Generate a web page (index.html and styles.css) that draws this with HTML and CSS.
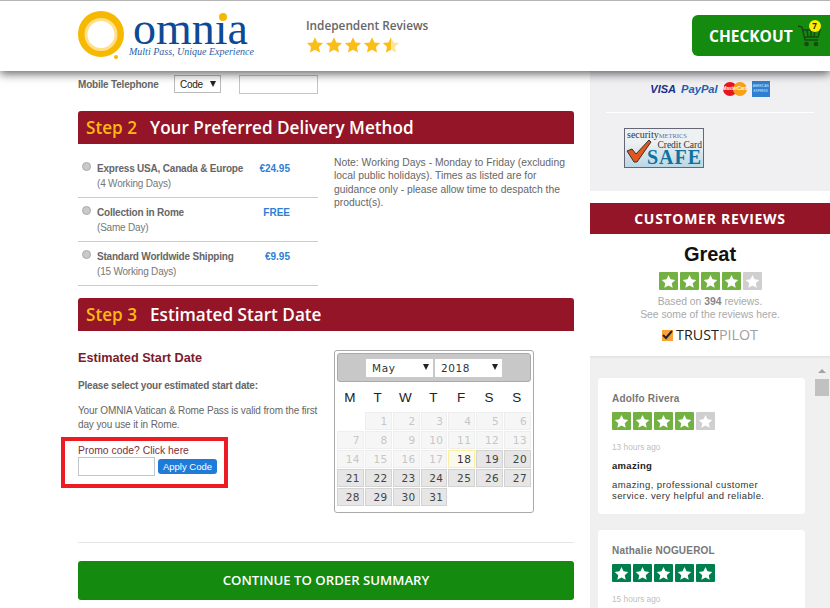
FILE: index.html

```html
<!DOCTYPE html>
<html lang="en">
<head>
  <meta charset="UTF-8" />
  <meta name="viewport" content="width=device-width, initial-scale=1.0"/>
  <title>Omnia Checkout</title>
  <link rel="stylesheet" href="styles.css">
</head>
<body>
  <svg class="defs" width="0" height="0">
    <symbol id="star" viewBox="0 0 24 24"><path d="M12 1.500l3.200 7 7.600.9-5.600 5.200 1.500 7.500L12 18.300l-6.700 3.800 1.500-7.500L1.200 9.400l7.600-.9z"/></symbol>
  </svg>

  <header id="header">
    <div class="logo">
      <svg class="logo-ring" width="46" height="50" viewBox="0 0 46 50">
        <circle cx="23" cy="23" r="18.500" fill="#fff" stroke="#f6b800" stroke-width="9"/>
        <circle cx="23" cy="23.500" r="15" fill="#fff" stroke="#ffe08a" stroke-width="3"/>
        <circle cx="38" cy="46" r="2" fill="#f6b800"/>
      </svg>
      <div class="logo-text">
        <span class="logo-name">omn<span class="logo-i">ı<b class="logo-dot"></b></span>a</span>
        <span class="logo-tag">Multi Pass, Unique Experience</span>
      </div>
    </div>
    <div class="indep">
      <div class="indep-title">Independent Reviews</div>
      <div class="indep-stars">
        <svg class="gold"><use href="#star"/></svg>
        <svg class="gold"><use href="#star"/></svg>
        <svg class="gold"><use href="#star"/></svg>
        <svg class="gold"><use href="#star"/></svg>
        <span class="half-star">
          <svg class="gold pale"><use href="#star"/></svg>
          <span class="half-clip"><svg class="gold"><use href="#star"/></svg></span>
        </span>
      </div>
    </div>
    <a class="checkout" href="#">
      <span>CHECKOUT</span>
      <span class="cart">
        <svg width="24" height="24" viewBox="0 0 24 24" fill="none" stroke="#174a12" stroke-width="1.500">
          <path d="M1 2l4 1 3 13h13M6 6h17l-2 7H8M10 6l1 7M14 6v7M18 6l-1 7"/>
          <circle cx="9.500" cy="20" r="1.600" fill="#174a12"/>
          <circle cx="19" cy="20" r="1.600" fill="#174a12"/>
        </svg>
        <span class="cart-count">7</span>
      </span>
    </a>
  </header>

  <div id="page">
    <main class="left">
      <div class="phone-row">
        <label>Mobile Telephone</label>
        <span class="code-select">Code<i class="arrow"></i></span>
        <input class="phone-input" type="text">
      </div>

      <h2 class="step-bar"><span class="step-num">Step 2</span>Your Preferred Delivery Method</h2>
      <div class="delivery">
        <div class="options">
          <div class="option">
            <span class="radio"></span>
            <div class="option-text"><b>Express USA, Canada &amp; Europe</b><span>(4 Working Days)</span></div>
            <b class="price">€24.95</b>
          </div>
          <div class="option">
            <span class="radio"></span>
            <div class="option-text"><b>Collection in Rome</b><span>(Same Day)</span></div>
            <b class="price">FREE</b>
          </div>
          <div class="option">
            <span class="radio"></span>
            <div class="option-text"><b>Standard Worldwide Shipping</b><span>(15 Working Days)</span></div>
            <b class="price">€9.95</b>
          </div>
        </div>
        <p class="note">Note: Working Days - Monday to Friday (excluding local public holidays). Times as listed are for guidance only - please allow time to despatch the product(s).</p>
      </div>

      <h2 class="step-bar"><span class="step-num">Step 3</span>Estimated Start Date</h2>
      <div class="start">
        <div class="start-text">
          <h3>Estimated Start Date</h3>
          <p class="select-msg">Please select your estimated start date:</p>
          <p class="valid-msg">Your OMNIA Vatican &amp; Rome Pass is valid from the first day you use it in Rome.</p>
          <div class="promo">
            <div class="promo-label">Promo code? Click here</div>
            <div class="promo-row">
              <input class="promo-input" type="text">
              <button class="apply">Apply Code</button>
            </div>
          </div>
        </div>
        <div class="calendar">
          <div class="cal-head">
            <span class="cal-select">May<i class="arrow"></i></span>
            <span class="cal-select">2018<i class="arrow"></i></span>
          </div>
          <div class="cal-days">
            <span>M</span><span>T</span><span>W</span><span>T</span><span>F</span><span>S</span><span>S</span>
          </div>
          <div class="cal-grid" id="calGrid"></div>
        </div>
      </div>

      <hr class="rule">
      <a class="continue" href="#">CONTINUE TO ORDER SUMMARY</a>
    </main>

    <aside class="right">
      <div class="secure">
        <div class="cards">
          <span class="visa">VISA</span>
          <span class="paypal">PayPal</span>
          <span class="mc"><i></i><i></i><em>MasterCard</em></span>
          <span class="amex">AMERICAN EXPRESS</span>
        </div>
        <div class="secure-rule"></div>
        <div class="metrics">
          <div class="metrics-top">security<span>METRICS</span></div>
          <div class="metrics-mid">Credit Card</div>
          <div class="metrics-safe">SAFE</div>
          <svg class="metrics-check" width="26" height="26" viewBox="0 0 26 26"><path d="M1 13l5-2 4 5L23 2l2 2L11 24H8z" fill="#e2571e" stroke="#333" stroke-width="1"/></svg>
        </div>
      </div>

      <h2 class="reviews-bar">CUSTOMER REVIEWS</h2>
      <div class="summary">
        <div class="great">Great</div>
        <div class="tp-stars">
          <span class="tp green"><svg><use href="#star"/></svg></span>
          <span class="tp green"><svg><use href="#star"/></svg></span>
          <span class="tp green"><svg><use href="#star"/></svg></span>
          <span class="tp green"><svg><use href="#star"/></svg></span>
          <span class="tp off"><svg><use href="#star"/></svg></span>
        </div>
        <p class="based">Based on <b>394</b> reviews.<br>See some of the reviews here.</p>
        <div class="trustpilot"><span class="tp-box"><svg width="11" height="11" viewBox="0 0 11 11"><path d="M1 5l3 3 6-7" fill="none" stroke="#222" stroke-width="2"/></svg></span>TRUST<span>PILOT</span></div>
      </div>

      <div class="review-list">
        <div class="cards-col">
          <div class="review">
            <div class="who">Adolfo Rivera</div>
            <div class="tp-stars">
              <span class="tp green"><svg><use href="#star"/></svg></span>
              <span class="tp green"><svg><use href="#star"/></svg></span>
              <span class="tp green"><svg><use href="#star"/></svg></span>
              <span class="tp green"><svg><use href="#star"/></svg></span>
              <span class="tp off"><svg><use href="#star"/></svg></span>
            </div>
            <div class="ago">13 hours ago</div>
            <div class="r-title">amazing</div>
            <p class="r-body">amazing, professional customer service. very helpful and reliable.</p>
          </div>
          <div class="review">
            <div class="who">Nathalie NOGUEROL</div>
            <div class="tp-stars">
              <span class="tp dark"><svg><use href="#star"/></svg></span>
              <span class="tp dark"><svg><use href="#star"/></svg></span>
              <span class="tp dark"><svg><use href="#star"/></svg></span>
              <span class="tp dark"><svg><use href="#star"/></svg></span>
              <span class="tp dark"><svg><use href="#star"/></svg></span>
            </div>
            <div class="ago">15 hours ago</div>
          </div>
        </div>
        <div class="scrollbar"><i class="scroll-up"></i><i class="scroll-thumb"></i></div>
      </div>
    </aside>
  </div>

  <script>
    // May 2018 starts on a Tuesday, days before the 18th are disabled
    const grid = document.getElementById('calGrid');
    grid.appendChild(document.createElement('span'));
    for (let d = 1; d <= 31; d++) {
      const cell = document.createElement('span');
      cell.textContent = d;
      cell.className = d < 18 ? 'day off' : d === 18 ? 'day today' : 'day';
      grid.appendChild(cell);
    }
  </script>
</body>
</html>
```

FILE: styles.css

```css
* {
  margin: 0;
  padding: 0;
  box-sizing: border-box;
}
html, body {
  width: 100%;
  height: 100%;
  overflow: hidden;
  font-family: "Liberation Sans", Arial, sans-serif;
  font-size: 11px;
  color: #666;
  background: #fff;
}
.defs {
  display: block;
  height: 0;
}

/* header */
#header {
  height: 71px;
  display: flex;
  align-items: flex-start;
  padding-left: 78px;
  background: #fff;
  border-top: 1px solid #b5b5b5;
  box-shadow: 0 3px 9px rgba(0,0,0,0.6);
  position: relative;
  z-index: 5;
}
.logo {
  width: 228px;
  display: flex;
  padding-top: 10px;
}
.logo-ring {
  flex: none;
}
.logo-text {
  display: flex;
  flex-direction: column;
  margin-left: 5px;
}
.logo-name {
  font-family: "Liberation Serif", serif;
  font-size: 46px;
  line-height: 33px;
  height: 34px;
  margin: 1px 0 0 4px;
  color: #0c4a96;
}
.logo-i {
  position: relative;
}
.logo-dot {
  position: absolute;
  left: 4px;
  top: 10px;
  width: 8px;
  height: 8px;
  border-radius: 50%;
  background: #f6b800;
}
.logo-tag {
  font-family: "Liberation Serif", serif;
  font-style: italic;
  font-size: 10px;
  line-height: 12px;
  color: #2b62a8;
  white-space: nowrap;
}
.indep {
  width: 386px;
  padding-top: 16px;
}
.indep-title {
  font-family: "Open Sans", sans-serif;
  font-size: 11.800px;
  font-weight: 600;
  line-height: 16px;
  color: #666;
}
.indep-stars {
  display: flex;
  gap: 1px;
  margin-top: 3px;
}
.gold {
  width: 18px;
  height: 18px;
  fill: #fbbd18;
  display: block;
}
.pale {
  fill: #fde49b;
}
.half-star {
  position: relative;
  width: 18px;
  height: 18px;
}
.half-clip {
  position: absolute;
  left: 0;
  top: 0;
  width: 9px;
  height: 18px;
  overflow: hidden;
}
.checkout {
  width: 138px;
  height: 41px;
  margin-top: 14px;
  display: flex;
  align-items: center;
  padding-left: 17px;
  background: #148a0e;
  border-radius: 6px 0 0 6px;
  color: #fff;
  font-family: "Open Sans", sans-serif;
  font-size: 15.500px;
  font-weight: 700;
  line-height: 20px;
  text-decoration: none;
}
.cart {
  position: relative;
  margin-left: 4px;
  height: 24px;
}
.cart-count {
  position: absolute;
  top: -4px;
  right: 0;
  width: 12px;
  height: 12px;
  border-radius: 50%;
  background: #ffec00;
  color: #222;
  font-size: 8px;
  line-height: 12px;
  text-align: center;
}

/* columns */
#page {
  display: flex;
  height: 536px;
}
.left {
  width: 590px;
  padding: 0 16px 0 78px;
  flex: none;
}
.right {
  width: 240px;
  flex: none;
}

.phone-row {
  height: 40px;
  display: flex;
  align-items: flex-start;
  padding-top: 5px;
}
.phone-row label {
  width: 96px;
  margin-top: 1px;
  font-weight: bold;
  font-size: 10px;
  letter-spacing: -0.2px;
  line-height: 16px;
  color: #666;
}
.code-select {
  position: relative;
  width: 47px;
  height: 18px;
  margin-top: -1px;
  border: 1px solid #bbb;
  padding-left: 5px;
  font-size: 10px;
  letter-spacing: -0.3px;
  line-height: 17px;
  color: #222;
}
.arrow {
  position: absolute;
  right: 4px;
  top: 5px;
  border-left: 3px solid transparent;
  border-right: 3px solid transparent;
  border-top: 6px solid #222;
}
.phone-input {
  width: 79px;
  height: 19px;
  margin: -1px 0 0 18px;
  border: 1px solid #c4c4c4;
}

.step-bar {
  height: 33px;
  display: flex;
  align-items: center;
  padding-left: 8px;
  background: #931527;
  border-radius: 3px 3px 0 0;
  color: #fff;
  font-family: "Open Sans", sans-serif;
  font-size: 17.150px;
  font-weight: 600;
}
.step-num {
  color: #fdb913;
  margin-right: 13px;
}

.delivery {
  display: flex;
  height: 154px;
}
.options {
  width: 240px;
  padding-top: 10px;
}
.option {
  height: 44px;
  display: flex;
  align-items: flex-start;
  border-bottom: 1px solid #ccc;
  padding: 7px 28px 0 4px;
  font-size: 10px;
  letter-spacing: -0.2px;
  line-height: 15px;
}
.radio {
  flex: none;
  width: 9px;
  height: 9px;
  margin-top: 1px;
  border-radius: 50%;
  background: #c9c9c9;
  border: 1px solid #aaa;
}
.option-text {
  flex: 1;
  display: flex;
  flex-direction: column;
  margin-left: 6px;
  white-space: nowrap;
}
.option-text span {
  color: #777;
}
.price {
  color: #2f7fd6;
  letter-spacing: 0;
  white-space: nowrap;
}
.note {
  width: 240px;
  margin-left: 16px;
  padding-top: 12px;
  font-size: 10.350px;
  line-height: 13.300px;
  color: #666;
}

.start {
  display: flex;
  height: 211px;
}
.start-text {
  width: 240px;
}
.start-text h3 {
  margin-top: 19px;
  font-size: 12.700px;
  font-weight: bold;
  line-height: 16px;
  color: #7d1a2b;
}
.select-msg {
  margin-top: 13px;
  font-size: 10px;
  letter-spacing: -0.2px;
  font-weight: bold;
  line-height: 13px;
}
.valid-msg {
  margin-top: 12px;
  font-size: 10px;
  letter-spacing: -0.13px;
  line-height: 13.500px;
}
.promo {
  width: 167px;
  height: 51px;
  margin: 6px 0 0 -17px;
  padding: 5px 0 0 13px;
  border: 4px solid #ed1c24;
  font-size: 10.400px;
  color: #7d3038;
}
.promo-label {
  line-height: 11px;
  margin-top: -1px;
}
.promo-row {
  display: flex;
  gap: 3px;
  margin-top: 1px;
}
.promo-input {
  width: 77px;
  height: 19px;
  border: 1px solid #c0c4cc;
}
.apply {
  width: 59px;
  height: 15px;
  margin-top: 2px;
  border: none;
  border-radius: 3px;
  background: #1f7bd8;
  color: #fff;
  font-family: "Liberation Sans", Arial, sans-serif;
  font-size: 9.500px;
}

.calendar {
  width: 200px;
  height: 163px;
  margin: 19px 0 0 16px;
  padding: 2px;
  border: 1px solid #aaa;
  border-radius: 3px;
  font-family: "DejaVu Sans", sans-serif;
}
.cal-head {
  height: 29px;
  display: flex;
  justify-content: center;
  align-items: center;
  gap: 2px;
  background: #c8c8c8;
  border: 1px solid #aaa;
  border-radius: 3px;
}
.cal-select {
  position: relative;
  width: 67px;
  height: 18px;
  padding-left: 6px;
  background: #fff;
  font-size: 10.500px;
  line-height: 18px;
  color: #333;
  letter-spacing: 0.6px;
}
.cal-days {
  display: grid;
  grid-template-columns: repeat(7, 27.800px);
  height: 30px;
  margin-left: -1px;
  align-items: center;
  justify-items: center;
  font-family: "Liberation Sans", Arial, sans-serif;
  font-size: 13.500px;
  color: #222;
}
.cal-grid {
  display: grid;
  grid-template-columns: repeat(7, 1fr);
  grid-auto-rows: 18px;
  column-gap: 1px;
  row-gap: 1px;
}
.day {
  border: 1px solid #d3d3d3;
  background: #e6e6e6;
  color: #444;
  font-size: 10.500px;
  line-height: 16px;
  text-align: right;
  padding-right: 3px;
  letter-spacing: 0.4px;
}
.day.off {
  border-color: #eee;
  background: #f6f6f6;
  color: #c6c6c6;
}
.day.today {
  border-color: #fcefa1;
  background: #fbf9ee;
  color: #333;
}

.rule {
  border: none;
  border-top: 1px solid #e6e6e6;
}
.continue {
  display: block;
  height: 39px;
  margin-top: 18px;
  background: #148a0e;
  border-radius: 3px;
  color: #fff;
  font-family: "Open Sans", sans-serif;
  font-size: 13.200px;
  font-weight: 600;
  line-height: 39px;
  text-align: center;
  text-decoration: none;
}

/* right column */
.secure {
  height: 120px;
  padding: 9px 16px 0;
  background: #f0f0f3;
}
.cards {
  display: flex;
  justify-content: center;
  align-items: center;
  gap: 5px;
  height: 17px;
}
.visa {
  font-size: 11px;
  font-weight: bold;
  font-style: italic;
  color: #1a2f86;
}
.paypal {
  font-size: 11.200px;
  font-weight: bold;
  font-style: italic;
  color: #1f5fae;
}
.mc {
  position: relative;
  display: flex;
}
.mc i {
  width: 14px;
  height: 14px;
  border-radius: 50%;
  background: #e8141f;
}
.mc i + i {
  background: #f9a11b;
  margin-left: -4px;
}
.mc em {
  position: absolute;
  left: 0;
  right: 0;
  top: 4px;
  font-size: 4.500px;
  font-style: normal;
  font-weight: bold;
  line-height: 6px;
  text-align: center;
  color: #fff;
}
.amex {
  width: 18px;
  height: 16px;
  padding-top: 3px;
  background: #2f80d0;
  color: #dbeaf8;
  font-size: 3px;
  line-height: 5px;
  text-align: center;
}
.secure-rule {
  border-top: 1px solid #fff;
  margin-top: 15px;
}
.metrics {
  position: relative;
  width: 80px;
  height: 40px;
  margin: 15px 0 0 18px;
  padding: 1px 1px 0 2px;
  border: 1px solid #667;
  background: linear-gradient(#eef1f1 35%, #b9d8e6);
  font-family: "Liberation Serif", serif;
  color: #333;
  overflow: hidden;
}
.metrics-top {
  font-size: 10px;
  line-height: 9px;
  white-space: nowrap;
}
.metrics-top span {
  font-size: 6.500px;
  color: #5a6ea8;
}
.metrics-mid {
  font-size: 9.500px;
  line-height: 10px;
  text-align: right;
  white-space: nowrap;
}
.metrics-safe {
  font-size: 20px;
  font-weight: bold;
  line-height: 15px;
  color: #10709f;
  text-align: right;
  letter-spacing: 1px;
}
.metrics-check {
  position: absolute;
  left: 1px;
  top: 9px;
}

.reviews-bar {
  height: 31px;
  margin-top: 12px;
  background: #931527;
  color: #fff;
  font-family: "Open Sans", sans-serif;
  font-size: 14px;
  font-weight: 700;
  letter-spacing: 0.7px;
  line-height: 31px;
  text-align: center;
}
.summary {
  height: 122px;
  text-align: center;
  padding-top: 9px;
}
.great {
  font-size: 20px;
  font-weight: bold;
  line-height: 23px;
  color: #111;
}
.summary .tp-stars {
  justify-content: center;
  margin-top: 6px;
}
.tp-stars {
  display: flex;
  gap: 2px;
}
.tp {
  width: 19px;
  height: 18px;
  border-radius: 1px;
  display: flex;
  align-items: center;
  justify-content: center;
}
.tp svg {
  width: 15px;
  height: 15px;
  fill: #fff;
}
.tp.green {
  background: #73b143;
}
.tp.off {
  background: #cfcfcf;
}
.tp.dark {
  background: #007f4e;
}
.based {
  margin-top: 5px;
  font-size: 10.350px;
  line-height: 13px;
  color: #a9a9a9;
}
.based b {
  color: #888;
}
.trustpilot {
  display: flex;
  justify-content: center;
  align-items: center;
  margin-top: 6px;
  font-family: "Open Sans", sans-serif;
  font-size: 14.300px;
  line-height: 16px;
  color: #222;
}
.trustpilot span:last-child {
  color: #a0a0a0;
}
.tp-box {
  width: 11px;
  height: 11px;
  margin-right: 3px;
  background: #f9a237;
}
.tp-box svg {
  display: block;
}

.review-list {
  height: 252px;
  display: flex;
  background: #f0f0f0;
  box-shadow: inset 0 3px 3px -2px rgba(0,0,0,0.08);
  overflow: hidden;
}
.cards-col {
  width: 215px;
  padding: 22px 0 0 8px;
  display: flex;
  flex-direction: column;
  gap: 16px;
}
.review {
  flex: none;
  width: 207px;
  height: 136px;
  padding: 15px 14px 0;
  background: #fff;
  border-radius: 4px;
}
.who {
  font-size: 10px;
  font-weight: bold;
  line-height: 12px;
  color: #777;
  letter-spacing: 0.2px;
}
.review .tp-stars {
  margin-top: 7px;
}
.ago {
  margin-top: 12px;
  font-size: 8.300px;
  line-height: 11px;
  color: #c0c0c0;
}
.r-title {
  margin-top: 7px;
  font-size: 9.500px;
  font-weight: bold;
  line-height: 11px;
  color: #222;
  letter-spacing: 0.3px;
}
.r-body {
  margin-top: 8px;
  font-size: 9.500px;
  line-height: 11px;
  color: #333;
  letter-spacing: 0.4px;
}
.scrollbar {
  width: 25px;
  padding: 13px 0 0 9px;
  display: flex;
  flex-direction: column;
  align-items: center;
}
.scroll-up {
  border-left: 4px solid transparent;
  border-right: 4px solid transparent;
  border-bottom: 4px solid #a3a3a3;
}
.scroll-thumb {
  width: 14px;
  height: 17px;
  margin-top: 6px;
  background: #c1c1c1;
}
```
